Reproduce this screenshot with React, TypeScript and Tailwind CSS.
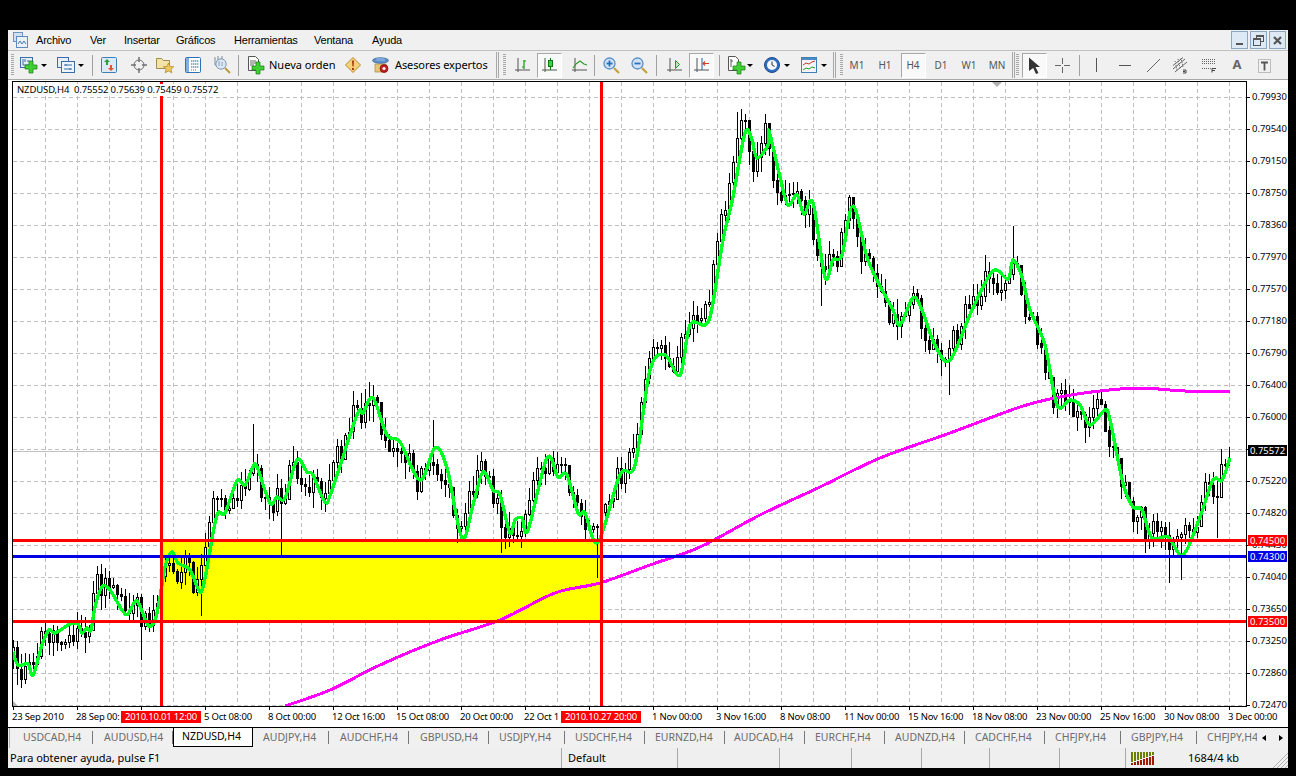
import type { ReactNode } from "react";

const ui = "font-['Noto_Sans',sans-serif]";
const axisText = "text-[9.5px] leading-none tracking-[-0.2px]";

// green moving average, screen coordinates
const maPoints: number[][] = [
  [13, 652], [18, 665], [28, 664], [33, 675], [42, 645], [49, 630], [55, 633], [70, 624], [78, 624], [82, 633], [87, 628], [91, 630],
  [95, 607], [102, 587], [110, 590], [122, 610], [128, 614], [137, 601], [148, 625], [155, 620], [160, 597], [165, 567], [172, 552],
  [178, 563], [190, 570], [200, 592], [205, 578], [208, 562], [217, 515], [225, 513], [237, 481], [245, 485], [253, 467], [257, 467],
  [270, 503], [277, 497], [285, 498], [297, 460], [307, 472], [313, 475], [325, 502], [332, 490], [357, 415], [363, 413], [373, 398],
  [387, 435], [400, 442], [420, 480], [435, 448], [447, 468], [462, 538], [473, 505], [483, 472], [493, 490], [500, 495], [510, 533],
  [515, 520], [522, 518], [528, 530], [547, 458], [558, 477], [567, 475], [578, 513], [585, 513], [598, 542], [620, 475], [635, 465],
  [650, 370], [665, 355], [680, 375], [690, 325], [705, 325], [712, 308], [723, 240], [733, 197], [745, 133], [752, 140], [757, 158],
  [768, 145], [769, 131], [780, 177], [788, 205], [797, 195], [804, 214], [813, 203], [825, 277], [833, 260], [842, 255], [853, 206],
  [867, 257], [878, 282], [893, 310], [900, 325], [913, 298], [922, 310], [935, 345], [950, 360], [972, 310], [993, 271], [1008, 279],
  [1013, 260], [1022, 277], [1030, 310], [1045, 345], [1057, 405], [1070, 400], [1080, 405], [1090, 425], [1105, 410], [1110, 420],
  [1120, 470], [1125, 490], [1133, 507], [1142, 510], [1152, 538], [1168, 537], [1183, 555], [1200, 517], [1213, 480], [1222, 480], [1230, 458],
];

const magentaPoints: number[][] = [
  [285, 706], [330, 690], [380, 665], [440, 640], [500, 620], [555, 593], [600, 583], [650, 565], [700, 547], [760, 515], [820, 487], [880, 458],
  [950, 433], [1020, 407], [1060, 397], [1100, 391], [1140, 388], [1185, 391], [1230, 391],
];

// catmull-rom through the points, so the averages come out round
function smooth(p: number[][]) {
  let d = `M${p[0][0]} ${p[0][1]}`;
  for (let i = 0; i < p.length - 1; i++) {
    const a = p[Math.max(i - 1, 0)];
    const b = p[i];
    const c = p[i + 1];
    const e = p[Math.min(i + 2, p.length - 1)];
    d += `C${b[0] + (c[0] - a[0]) / 6} ${b[1] + (c[1] - a[1]) / 6} ${c[0] - (e[0] - b[0]) / 6} ${c[1] - (e[1] - b[1]) / 6} ${c[0]} ${c[1]}`;
  }
  return d;
}

function maAt(x: number) {
  for (let i = 1; i < maPoints.length; i++) {
    const [x0, y0] = maPoints[i - 1];
    const [x1, y1] = maPoints[i];
    if (x <= x1) return y0 + ((y1 - y0) * (x - x0)) / (x1 - x0);
  }
  return 458;
}

// a few wicks that stand out in the picture
const spikes: Record<number, [number, number]> = {
  141: [0, 660], 201: [0, 616], 253: [424, 0], 281: [0, 558], 369: [382, 0], 433: [420, 0], 501: [0, 553], 597: [0, 578],
  737: [112, 0], 765: [114, 0], 821: [0, 306], 849: [195, 0], 949: [0, 395], 1013: [226, 0], 1169: [0, 583], 1181: [0, 580], 1217: [0, 538],
};

let seed = 41;
function rnd() {
  seed = (seed * 16807) % 2147483647;
  return seed / 2147483647;
}

type Candle = { x: number; o: number; c: number; h: number; l: number };
const candles: Candle[] = [];
let prev = maAt(13);
let drift = 0;
for (let k = 0; k <= 304; k++) {
  const x = 13 + 4 * k;
  drift = drift * 0.35 + (rnd() - 0.5) * 30;
  const mid = maAt(x + 4);
  const c = mid + Math.max(-17, Math.min(17, drift));
  const o = prev;
  let h = Math.max(Math.min(o, c) - rnd() * 16 - 1, Math.min(o, c, mid - 24));
  let l = Math.min(Math.max(o, c) + rnd() * 16 + 1, Math.max(o, c, mid + 24));
  const s = spikes[x];
  if (s && s[0]) h = s[0];
  if (s && s[1]) l = s[1];
  candles.push({ x, o, c, h, l });
  prev = c;
}
candles[304] = { x: 1229, o: 461, c: 458, h: 447, l: 466 };

const gridX = Array.from({ length: 38 }, (_, i) => 45 + i * 32);
const gridY = Array.from({ length: 20 }, (_, i) => 97 + i * 32);

function Chart() {
  return (
    <svg width="1233" height="624" viewBox="13 82 1233 624" className="block">
      <g stroke="#c0c0c0" strokeDasharray="4 3" shapeRendering="crispEdges">
        {gridX.map((x) => (
          <line key={x} x1={x + 0.5} y1="82" x2={x + 0.5} y2="706" />
        ))}
        {gridY.map((y) => (
          <line key={y} x1="13" y1={y + 0.5} x2="1246" y2={y + 0.5} />
        ))}
      </g>
      <line x1="13" y1="451.5" x2="1246" y2="451.5" stroke="#c0c0c0" shapeRendering="crispEdges" />
      <rect x="161" y="540" width="440" height="81" fill="#ffff00" />
      <g shapeRendering="crispEdges">
        {candles.map((d) => {
          const top = Math.round(Math.min(d.o, d.c));
          const hgt = Math.max(1, Math.round(Math.abs(d.o - d.c)));
          const bear = d.c > d.o;
          return (
            <g key={d.x}>
              <line x1={d.x + 0.5} y1={Math.round(d.h)} x2={d.x + 0.5} y2={Math.round(d.l)} stroke="#000" />
              <rect x={d.x - 0.5} y={top + 0.5} width="2" height={hgt} fill={bear ? "#000" : "#fff"} stroke="#000" strokeWidth="1" />
            </g>
          );
        })}
      </g>
      <path d={smooth(magentaPoints)} fill="none" stroke="#ff00ff" strokeWidth="3" shapeRendering="crispEdges" />
      <path d={smooth(maPoints)} fill="none" stroke="#00ff22" strokeWidth="3.4" strokeLinejoin="round" shapeRendering="crispEdges" />
      <g shapeRendering="crispEdges">
        <rect x="13" y="539" width="1233" height="3" fill="#ff0000" />
        <rect x="13" y="555" width="1233" height="3" fill="#0000e6" />
        <rect x="13" y="620" width="1233" height="3" fill="#ff0000" />
        <rect x="160" y="82" width="3" height="624" fill="#ff0000" />
        <rect x="600" y="82" width="3" height="624" fill="#ff0000" />
      </g>
      <path d="M992 82h10l-5 5z" fill="#b0b0b0" />
      <path d="M13 701l5 5h-5z" fill="#b0b0b0" />
    </svg>
  );
}

// "" where the reference shows a tick but a price tag covers the label
const prices = [
  "0.79930", "0.79540", "0.79150", "0.78750", "0.78360", "0.77970", "0.77570", "0.77180", "0.76790", "0.76400",
  "0.76000", "", "0.75220", "0.74820", "0.74430", "0.74040", "0.73650", "0.73250", "0.72860", "0.72470",
];

const times = [
  "23 Sep 2010", "28 Sep 00:", "", "5 Oct 08:00", "8 Oct 00:00", "12 Oct 16:00", "15 Oct 08:00", "20 Oct 00:00", "22 Oct 1", "",
  "1 Nov 00:00", "3 Nov 16:00", "8 Nov 08:00", "11 Nov 00:00", "15 Nov 16:00", "18 Nov 08:00", "23 Nov 00:00", "25 Nov 16:00", "30 Nov 08:00", "3 Dec 00:00",
];

function PriceTag({ className, children }: { className: string; children: ReactNode }) {
  return (
    <div className={`absolute left-[1px] h-[11px] w-[39px] flex items-center justify-center text-[9.5px] leading-none text-white ${className}`}>
      {children}
    </div>
  );
}

function Grip({ className = "" }: { className?: string }) {
  return <div className={`w-[3px] h-[22px] shrink-0 bg-[repeating-linear-gradient(to_bottom,#a8a8a8_0,#a8a8a8_1px,transparent_1px,transparent_2px)] ${className}`} />;
}
function Sep({ className = "" }: { className?: string }) {
  return <div className={`w-px h-[21px] shrink-0 bg-[#a0a0a0] ${className}`} />;
}
function DoubleSep({ className = "" }: { className?: string }) {
  return <div className={`w-[3px] h-[26px] shrink-0 border-x border-[#a8a8a8] ${className}`} />;
}
function Caret({ className = "" }: { className?: string }) {
  return <div className={`w-0 h-0 shrink-0 mt-px border-x-[3px] border-x-transparent border-t-[3px] border-t-black ${className}`} />;
}
function Pressed({ className = "", children }: { className?: string; children: ReactNode }) {
  return (
    <div className={`w-[25px] h-[25px] shrink-0 flex items-center justify-center border border-t-[#a8a8a8] border-l-[#a8a8a8] border-b-white border-r-white bg-[#f9f9f9] ${className}`}>
      {children}
    </div>
  );
}

const GreenPlus = ({ x, y }: { x: number; y: number }) => (
  <path d={`M${x + 4} ${y}h4v4h4v4h-4v4h-4v-4h-4v-4h4z`} fill="#3fd034" stroke="#1b7a16" strokeWidth="0.7" />
);

function AppIcon() {
  return (
    <svg width="15" height="16" viewBox="0 0 15 16" className="shrink-0">
      <rect x="0.5" y="0.5" width="9" height="9" fill="#cfe0f2" stroke="#6b93c4" />
      <rect x="3.5" y="4.5" width="11" height="11" fill="#e8f0f9" stroke="#5f8ac0" />
      <path d="M5 12l2-3 2 3 2-3 2 3" stroke="#4a78b0" fill="none" />
    </svg>
  );
}
function NewChartIcon() {
  return (
    <svg width="18" height="18" viewBox="0 0 18 18" className="shrink-0">
      <rect x="0.5" y="1.5" width="12" height="10" fill="#e4eff9" stroke="#3b6ea5" />
      <path d="M3 3v6h7M5 3v3M8 4v2" stroke="#3b6ea5" fill="none" />
      <GreenPlus x={5} y={5} />
    </svg>
  );
}
function ProfileIcon() {
  return (
    <svg width="18" height="18" viewBox="0 0 18 18" className="shrink-0">
      <rect x="0.5" y="1.5" width="11" height="10" fill="#e4eff9" stroke="#3b6ea5" />
      <rect x="4.5" y="5.5" width="13" height="11" fill="#edf4fb" stroke="#3b6ea5" />
      <path d="M7 9h8M7 13h8M9 8v2M13 12v2" stroke="#3b6ea5" fill="none" />
    </svg>
  );
}
function MarketWatchIcon() {
  return (
    <svg width="16" height="16" viewBox="0 0 16 16" className="shrink-0">
      <rect x="0.5" y="0.5" width="15" height="15" rx="1" fill="#dceaf7" stroke="#3f7fb8" />
      <path d="M6 2l3 3H7v3H5V5H3z" fill="#2f9e32" />
      <path d="M10 14l-3-3h2V8h2v3h2z" fill="#e0582a" />
    </svg>
  );
}
function TargetIcon() {
  return (
    <svg width="16" height="16" viewBox="0 0 16 16" fill="none" stroke="#707070" className="shrink-0">
      <circle cx="8" cy="8" r="5" />
      <path d="M8 0v5M8 11v5M0 8h5M11 8h5" strokeWidth="1.5" />
    </svg>
  );
}
function FolderStarIcon() {
  return (
    <svg width="18" height="17" viewBox="0 0 18 17" className="shrink-0">
      <path d="M0.5 1.5h5l2 2h6v8h-13z" fill="#f4e3a8" stroke="#a08c50" />
      <path d="M12.5 6l1.6 3.4 3.6.4-2.7 2.4.8 3.6-3.3-1.9-3.3 1.9.8-3.6-2.7-2.4 3.6-.4z" fill="#eec65a" stroke="#a8832a" strokeWidth="0.7" />
    </svg>
  );
}
function TerminalIcon() {
  return (
    <svg width="16" height="16" viewBox="0 0 16 16" className="shrink-0">
      <rect x="0.5" y="0.5" width="15" height="15" rx="1" fill="#fff" stroke="#2f6fb5" strokeWidth="1" />
      <rect x="1" y="1" width="3" height="14" fill="#7fb0e0" />
      <path d="M6 4h8M6 7h8M6 10h8M6 13h6" stroke="#c04848" strokeDasharray="1 1" />
      <path d="M6 4h8M6 7h8M6 10h8" stroke="#6a9bd0" strokeOpacity="0.7" />
    </svg>
  );
}
function TesterIcon() {
  return (
    <svg width="18" height="18" viewBox="0 0 18 18" fill="none" className="shrink-0">
      <path d="M2 1v8h4M5 0v4M9 0v3" stroke="#7f8c9c" />
      <circle cx="8" cy="8" r="5.2" fill="#dbe7f2" stroke="#7f98b0" />
      <path d="M6 5v5M9 6v4" stroke="#8aa0b8" />
      <path d="M12 12l5 5" stroke="#b89a40" strokeWidth="2" />
    </svg>
  );
}
function NewOrderIcon() {
  return (
    <svg width="17" height="19" viewBox="0 0 17 19" className="shrink-0">
      <path d="M0.5 0.5h7l3 3v11h-10z" fill="#fff" stroke="#555" />
      <path d="M2 5h6M2 7h6M2 9h4" stroke="#666" />
      <GreenPlus x={4} y={6} />
    </svg>
  );
}
function WarnIcon() {
  return (
    <svg width="16" height="16" viewBox="0 0 16 16" className="shrink-0">
      <path d="M8 0.5L15.5 8 8 15.5 0.5 8z" fill="#f5d27a" stroke="#b58a2e" />
      <path d="M7 3.5h2l-.4 6h-1.2zM7 11h2v2H7z" fill="#a83a10" />
    </svg>
  );
}
function ExpertsIcon() {
  return (
    <svg width="17" height="18" viewBox="0 0 17 18" className="shrink-0">
      <path d="M3 8h11v8H3z" fill="#e8c678" stroke="#a88838" strokeWidth="0.7" />
      <ellipse cx="8.5" cy="4.5" rx="8" ry="2.8" fill="#5f8fca" stroke="#34608f" strokeWidth="0.7" />
      <rect x="4" y="2" width="9" height="3" rx="1.5" fill="#7ba8da" />
      <circle cx="12" cy="12.5" r="4" fill="#c01f1f" stroke="#7a1010" strokeWidth="0.7" />
      <circle cx="12" cy="12.5" r="1.6" fill="#fff" />
    </svg>
  );
}
const Axes = () => <path d="M3 1v14M0 13h15" stroke="#555" fill="none" />;
function BarsIcon() {
  return (
    <svg width="16" height="16" viewBox="0 0 16 16" fill="none" className="shrink-0">
      <Axes />
      <path d="M9 3v9M9 4h2M7 10h2" stroke="#159a15" strokeWidth="1.2" />
    </svg>
  );
}
function CandleIcon() {
  return (
    <svg width="16" height="16" viewBox="0 0 16 16" fill="none" className="shrink-0">
      <Axes />
      <path d="M8.5 1v12" stroke="#0e7a0e" />
      <rect x="6.5" y="3.5" width="4" height="6" fill="#3fd03f" stroke="#0e7a0e" />
    </svg>
  );
}
function LineIcon() {
  return (
    <svg width="16" height="16" viewBox="0 0 16 16" fill="none" className="shrink-0">
      <Axes />
      <path d="M1 11l3-4 4-3 4 3 3 1" stroke="#2a9a2a" strokeWidth="1.1" />
    </svg>
  );
}
function ZoomIcon({ plus }: { plus?: boolean }) {
  return (
    <svg width="17" height="17" viewBox="0 0 17 17" fill="none" className="shrink-0">
      <circle cx="6.5" cy="6.5" r="5.5" fill="#cfe2f7" stroke="#5b8ec8" strokeWidth="1.3" />
      <path d="M3.5 6.5h6" stroke="#2f6fb5" strokeWidth="1.8" />
      {plus && <path d="M6.5 3.5v6" stroke="#2f6fb5" strokeWidth="1.8" />}
      <path d="M11 11l5 5" stroke="#c2a03c" strokeWidth="2.2" />
    </svg>
  );
}
function AutoScrollIcon() {
  return (
    <svg width="16" height="16" viewBox="0 0 16 16" fill="none" className="shrink-0">
      <Axes />
      <path d="M8.5 3.5l4 4-4 4z" stroke="#1f9a1f" fill="#b6ecb6" />
    </svg>
  );
}
function ShiftIcon() {
  return (
    <svg width="16" height="16" viewBox="0 0 16 16" fill="none" className="shrink-0">
      <Axes />
      <path d="M8 1v12" stroke="#2060a0" />
      <path d="M9 6.5h6M11 4.5l-2 2 2 2" stroke="#d04020" strokeWidth="1.2" />
    </svg>
  );
}
function IndicatorIcon() {
  return (
    <svg width="18" height="19" viewBox="0 0 18 19" className="shrink-0">
      <path d="M0.5 0.5h7l3 3v11h-10z" fill="#fff" stroke="#555" />
      <path d="M3 3v8M3 5h2" stroke="#555" fill="none" />
      <GreenPlus x={5} y={6} />
    </svg>
  );
}
function ClockIcon() {
  return (
    <svg width="16" height="16" viewBox="0 0 16 16" className="shrink-0">
      <circle cx="8" cy="8" r="7.5" fill="#2f6fc0" stroke="#1c4a8a" />
      <circle cx="8" cy="8" r="5" fill="#f4f7fb" />
      <path d="M8 4.5V8l2.5 1.5" stroke="#333" fill="none" />
    </svg>
  );
}
function TemplateIcon() {
  return (
    <svg width="16" height="16" viewBox="0 0 16 16" fill="none" className="shrink-0">
      <rect x="0.5" y="0.5" width="15" height="15" fill="#f2f6fb" stroke="#3f7fb8" />
      <rect x="1" y="1" width="14" height="2" fill="#4a8ac8" />
      <path d="M2 8l3-2 3 1 3-2 3-1" stroke="#c83a2a" />
      <path d="M2 13l3-2 3 1 3-2 3 1" stroke="#2a9a2a" />
    </svg>
  );
}
function CursorIcon() {
  return (
    <svg width="13" height="17" viewBox="0 0 13 17" className="shrink-0">
      <path d="M1 0.5L12 10H7.5l3 6-2.5 1-2.8-6L1 14z" fill="#333" />
    </svg>
  );
}
function CrossIcon() {
  return (
    <svg width="15" height="15" viewBox="0 0 15 15" stroke="#666" className="shrink-0" shapeRendering="crispEdges">
      <path d="M7.5 0v6M7.5 9v6M0 7.5h6M9 7.5h6" />
    </svg>
  );
}
function ChannelIcon() {
  return (
    <svg width="16" height="18" viewBox="0 0 16 18" fill="none" stroke="#666" className="shrink-0">
      <path d="M1 13L13 3M1 9.5L11 1.5M3 16l12-10" />
      <path d="M3 5l2 9M6 3l2 9M9 2l2 9" strokeDasharray="1 1" />
      <path d="M11 17h3M11 14h3v3M11 15.5h2" stroke="#444" />
    </svg>
  );
}
function FiboIcon() {
  return (
    <svg width="14" height="15" viewBox="0 0 14 15" fill="none" stroke="#666" className="shrink-0">
      <path d="M0 1.5h14M0 3.5h14M0 5.5h14M0 10.5h9" strokeDasharray="1 1" />
      <path d="M10 14.5v-4h4M10 12.5h3" stroke="#444" />
    </svg>
  );
}
function TextBoxIcon() {
  return (
    <svg width="13" height="15" viewBox="0 0 13 15" fill="none" className="shrink-0">
      <rect x="0.5" y="1.5" width="12" height="13" stroke="#888" strokeDasharray="1 1" />
      <path d="M3 4.5h7M6.5 4.5v8" stroke="#555" strokeWidth="1.8" />
    </svg>
  );
}

function TimeFrame({ label, active }: { label: string; active?: boolean }) {
  return (
    <div className="w-[28px] shrink-0 flex items-center justify-center text-[10px] text-[#555]">
      {active ? <Pressed>{label}</Pressed> : label}
    </div>
  );
}

const tabs = [
  { label: "USDCAD,H4", w: "w-[83px] pl-[13px]" },
  { label: "AUDUSD,H4", w: "w-[80px] pl-[11px]" },
  { label: "NZDUSD,H4", w: "", active: true },
  { label: "AUDJPY,H4", w: "w-[76px] pl-[10px]" },
  { label: "AUDCHF,H4", w: "w-[80px] pl-[11px]" },
  { label: "GBPUSD,H4", w: "w-[80px] pl-[11px]" },
  { label: "USDJPY,H4", w: "w-[76px] pl-[10px]" },
  { label: "USDCHF,H4", w: "w-[80px] pl-[10px]" },
  { label: "EURNZD,H4", w: "w-[80px] pl-[10px]" },
  { label: "AUDCAD,H4", w: "w-[80px] pl-[9px]" },
  { label: "EURCHF,H4", w: "w-[80px] pl-[10px]" },
  { label: "AUDNZD,H4", w: "w-[80px] pl-[10px]" },
  { label: "CADCHF,H4", w: "w-[80px] pl-[10px]" },
  { label: "CHFJPY,H4", w: "w-[76px] pl-[10px]" },
  { label: "GBPJPY,H4", w: "w-[76px] pl-[10px]" },
];

const statusCells = ["w-[554px] pl-[2px]", "w-[116px] pl-[6px]", "w-[102px]", "w-[72px]", "w-[70px]", "w-[68px]", "w-[70px]", "w-[66px]"];

export default function App() {
  return (
    <div className={`w-[1296px] h-[776px] bg-black pt-[30px] px-2 pb-2 overflow-hidden ${ui}`}>
      <div className="w-[1280px] h-[738px] flex flex-col bg-[#f0f0f0]">
        {/* Menu */}
        <div className="h-[20px] shrink-0 flex items-center pl-[5px] font-['Liberation_Sans',sans-serif] text-[11px] tracking-[-0.2px] text-black">
          <div className="flex items-center">
            <AppIcon />
            <span className="ml-[8px] w-[54px]">Archivo</span>
            <span className="w-[34px]">Ver</span>
            <span className="w-[52px]">Insertar</span>
            <span className="w-[58px]">Gráficos</span>
            <span className="w-[80px]">Herramientas</span>
            <span className="w-[58px]">Ventana</span>
            <span>Ayuda</span>
          </div>
          <div className="ml-auto flex gap-[2px] pr-[2px]">
            <div className="w-[17px] h-[18px] flex items-end justify-center pb-[3px] border border-[#8aa6c2] bg-[#dde9f5]">
              <div className="w-[7px] h-[2px] bg-[#555]" />
            </div>
            <div className="w-[17px] h-[18px] flex items-center justify-center border border-[#8aa6c2] bg-[#dde9f5]">
              <svg width="11" height="11" viewBox="0 0 11 11" fill="none" stroke="#555" shapeRendering="crispEdges">
                <path d="M3.5 2.5V.5h7v6h-3" />
                <rect x="0.5" y="3.5" width="7" height="7" />
                <path d="M0 4.5h8M3 1.5h8" />
              </svg>
            </div>
            <div className="w-[17px] h-[18px] flex items-center justify-center border border-[#8aa6c2] bg-[#dde9f5]">
              <svg width="9" height="9" viewBox="0 0 9 9" stroke="#555" strokeWidth="2.2"><path d="M1 1l7 7M8 1L1 8" /></svg>
            </div>
          </div>
        </div>

        {/* Toolbars */}
        <div className="h-[30px] shrink-0 flex items-center border-t border-[#c0c0c0] border-b border-b-[#a8a8a8] text-[11px] overflow-hidden">
          <Grip className="ml-[3px]" />
          <div className="ml-[6px]"><NewChartIcon /></div>
          <Caret className="ml-[3px]" />
          <div className="ml-[10px]"><ProfileIcon /></div>
          <Caret className="ml-[3px]" />
          <Sep className="ml-[8px]" />
          <div className="ml-[8px]"><MarketWatchIcon /></div>
          <div className="ml-[14px]"><TargetIcon /></div>
          <div className="ml-[9px]"><FolderStarIcon /></div>
          <div className="ml-[11px]"><TerminalIcon /></div>
          <div className="ml-[12px]"><TesterIcon /></div>
          <Sep className="ml-[7px]" />
          <div className="ml-[9px]"><NewOrderIcon /></div>
          <span className="ml-[4px] w-[66px] shrink-0 whitespace-nowrap">Nueva orden</span>
          <div className="ml-[10px]"><WarnIcon /></div>
          <div className="ml-[11px]"><ExpertsIcon /></div>
          <span className="ml-[6px] w-[92px] shrink-0 whitespace-nowrap tracking-[-0.1px]">Asesores expertos</span>
          <DoubleSep className="ml-[9px]" />
          <Grip className="ml-[4px]" />
          <div className="ml-[9px]"><BarsIcon /></div>
          <Pressed className="ml-[6px]"><CandleIcon /></Pressed>
          <div className="ml-[10px]"><LineIcon /></div>
          <Sep className="ml-[6px]" />
          <div className="ml-[8px]"><ZoomIcon plus /></div>
          <div className="ml-[11px]"><ZoomIcon /></div>
          <Sep className="ml-[8px]" />
          <div className="ml-[10px]"><AutoScrollIcon /></div>
          <Pressed className="ml-[6px]"><ShiftIcon /></Pressed>
          <Sep className="ml-[5px]" />
          <div className="ml-[8px]"><IndicatorIcon /></div>
          <Caret className="ml-[1px]" />
          <div className="ml-[11px]"><ClockIcon /></div>
          <Caret className="ml-[4px]" />
          <div className="ml-[11px]"><TemplateIcon /></div>
          <Caret className="ml-[4px]" />
          <DoubleSep className="ml-[6px]" />
          <Grip className="ml-[4px]" />
          <TimeFrame label="M1" />
          <TimeFrame label="H1" />
          <TimeFrame label="H4" active />
          <TimeFrame label="D1" />
          <TimeFrame label="W1" />
          <TimeFrame label="MN" />
          <DoubleSep className="ml-[1px]" />
          <Grip className="ml-[1px]" />
          <Pressed className="ml-[3px]"><CursorIcon /></Pressed>
          <div className="ml-[8px]"><CrossIcon /></div>
          <Sep className="ml-[9px]" />
          <div className="ml-[16px] w-px h-[14px] shrink-0 bg-[#555]" />
          <div className="ml-[22px] w-[12px] h-px shrink-0 bg-[#555]" />
          <svg width="13" height="13" viewBox="0 0 13 13" stroke="#666" className="ml-[16px] shrink-0"><path d="M0 13L13 0" /></svg>
          <div className="ml-[12px]"><ChannelIcon /></div>
          <div className="ml-[14px]"><FiboIcon /></div>
          <span className="ml-[15px] w-[12px] shrink-0 text-center text-[13px] font-bold text-[#666]">A</span>
          <div className="ml-[15px]"><TextBoxIcon /></div>
        </div>

        {/* Chart with its two axes */}
        <div className="h-[647px] shrink-0 bg-white flex flex-col">
          <div className="h-[627px] shrink-0 flex pt-px">
            <div className="ml-[4px] w-[1235px] h-[626px] shrink-0 border border-black relative overflow-hidden">
              <Chart />
              <span className="absolute left-[4px] top-[2px] text-[9.5px] leading-[12px] tracking-[-0.12px] whitespace-pre bg-white text-black">NZDUSD,H4  0.75552 0.75639 0.75459 0.75572</span>
            </div>
            <div className="relative w-[41px] shrink-0 z-10">
              <div className="flex flex-col">
                {prices.map((p, i) => (
                  <div key={i} className="h-[32px] shrink-0 flex items-center">
                    <div className="w-[3px] h-px bg-black mr-[2px]" />
                    <span className="text-[9.5px] leading-none tracking-[-0.05px] text-black">{p}</span>
                  </div>
                ))}
              </div>
              <PriceTag className="top-[364px] bg-black">0.75572</PriceTag>
              <PriceTag className="top-[454px] bg-[#ff0000]">0.74500</PriceTag>
              <PriceTag className="top-[470px] bg-[#0000e6]">0.74300</PriceTag>
              <PriceTag className="top-[535px] bg-[#ff0000]">0.73500</PriceTag>
            </div>
          </div>
          <div className="relative h-[20px] shrink-0 flex pl-[5px] overflow-hidden">
            {times.map((t, i) => (
              <div key={i} className="w-[64px] shrink-0 flex flex-col">
                <div className="w-px h-[3px] bg-black" />
                <span className={`-ml-px mt-[2px] whitespace-nowrap text-black ${axisText}`}>{t}</span>
              </div>
            ))}
            <div className={`absolute left-[113px] top-[4px] w-[80px] h-[12px] flex items-center justify-center bg-[#ff0000] text-white ${axisText}`}>2010.10.01 12:00</div>
            <div className={`absolute left-[553px] top-[4px] w-[80px] h-[12px] flex items-center justify-center bg-[#ff0000] text-white ${axisText}`}>2010.10.27 20:00</div>
          </div>
        </div>

        {/* Symbol tabs */}
        <div className="h-[21px] shrink-0 flex border-t border-black text-[10.5px] text-[#6d6d6d] relative overflow-hidden">
          <div className="w-px bg-[#b0b0b0] ml-px shrink-0" />
          {tabs.map((t) =>
            t.active ? (
              <div key={t.label} className="w-[80px] h-[19px] shrink-0 flex items-center justify-center pr-[3px] bg-white border-x border-b border-black text-black">
                {t.label}
              </div>
            ) : (
              <div key={t.label} className={`${t.w} h-[19px] shrink-0 flex items-center`}>
                <span className="flex-1 whitespace-nowrap">{t.label}</span>
                <div className="w-px h-[13px] bg-[#777]" />
              </div>
            )
          )}
          <div className="w-[60px] h-[19px] shrink-0 flex items-center pl-[10px] overflow-hidden whitespace-nowrap">CHFJPY,H4</div>
          <div className="flex items-center gap-[13px] pl-[5px] h-[19px] text-black">
            <div className="w-0 h-0 border-y-[3px] border-y-transparent border-r-[4px] border-r-black" />
            <div className="w-0 h-0 border-y-[3px] border-y-transparent border-l-[4px] border-l-black" />
          </div>
        </div>

        {/* Status bar */}
        <div className="h-[20px] shrink-0 flex items-center bg-[#efefef] text-[11px] text-black relative">
          {statusCells.map((c, i) => (
            <div key={c} className={`${c} h-[20px] shrink-0 flex items-center border-r border-[#a8a8a8] whitespace-nowrap`}>
              {i === 0 && "Para obtener ayuda, pulse F1"}
              {i === 1 && "Default"}
            </div>
          ))}
          <svg width="24" height="13" viewBox="0 0 24 13" className="ml-[5px] shrink-0" shapeRendering="crispEdges">
            {[0, 3, 6, 9, 12, 15, 18, 21].map((x, i) => (
              <g key={x}>
                <rect x={x} y="0" width="2" height={10 - i} fill="#6d7f00" />
                <rect x={x} y={11 - i} width="2" height={2 + i} fill="#a11a00" />
              </g>
            ))}
          </svg>
          <span className="ml-[33px]">1684/4 kb</span>
          <svg width="15" height="15" viewBox="0 0 15 15" stroke="#b0b0b0" className="absolute right-0 bottom-0">
            <path d="M15 0L0 15M15 4L4 15M15 8L8 15M15 12L12 15" />
          </svg>
        </div>
      </div>
    </div>
  );
}
